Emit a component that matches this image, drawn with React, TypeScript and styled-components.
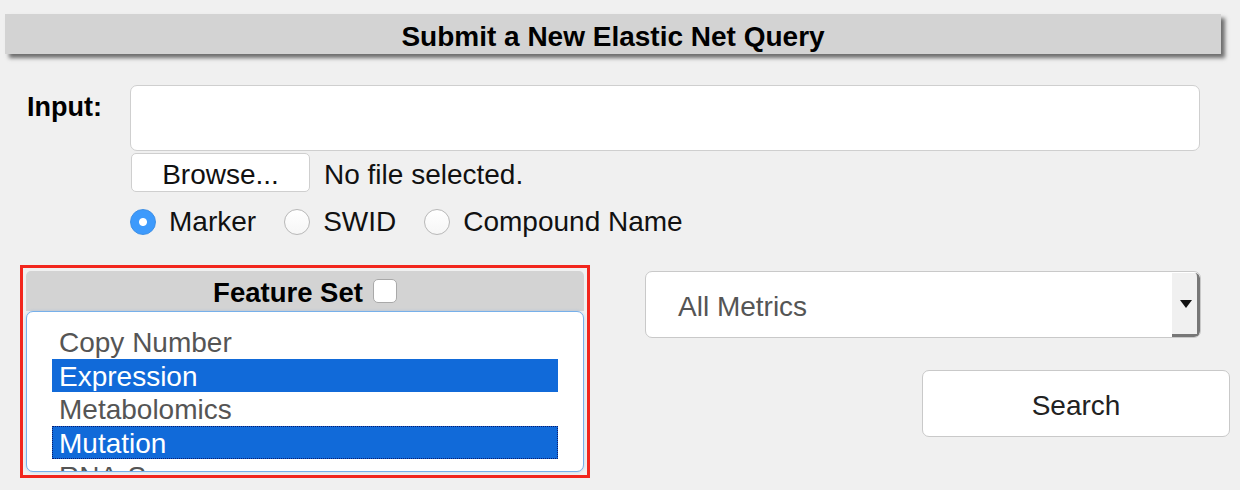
import React, { useState } from 'react';
import styled, { createGlobalStyle } from 'styled-components';

const GlobalStyle = createGlobalStyle`
    html, body {
        margin: 0;
        padding: 0;
        background: #f0f0f0;
    }
    body {
        font-family: "Liberation Sans", Arial, Helvetica, sans-serif;
        font-size: 28px;
        color: #000;
    }
`;

const FEATURES = ['Copy Number', 'Expression', 'Metabolomics', 'Mutation', 'RNA-Seq'];
const RADIOS = ['Marker', 'SWID', 'Compound Name'];

const App: React.FC = () => {
    const [idType, setIdType] = useState<string>('Marker');
    const [selected, setSelected] = useState<string[]>(['Expression', 'Mutation']);
    const [allFeatures, setAllFeatures] = useState<boolean>(false);

    const toggleFeature = (name: string) => {
        setSelected(prev => prev.includes(name) ? prev.filter(f => f !== name) : [...prev, name]);
    };

    return (
        <>
            <GlobalStyle />
            <Page>
                <Title>Submit a New Elastic Net Query</Title>
                <InputRow>
                    <Label>Input:</Label>
                    <Field>
                        <TextBox />
                        <FileRow>
                            <BrowseButton type="button">Browse...</BrowseButton>
                            <FileText>No file selected.</FileText>
                        </FileRow>
                        <RadioRow>
                            {
                                RADIOS.map(name =>
                                    <RadioLabel key={name}>
                                        <Radio
                                            type="radio"
                                            name="idType"
                                            checked={idType === name}
                                            onChange={() => setIdType(name)}
                                        />
                                        {name}
                                    </RadioLabel>
                                )
                            }
                        </RadioRow>
                    </Field>
                </InputRow>
                <Lower>
                    <FeatureBox>
                        <FeatureHeader>
                            Feature Set
                            <Check
                                type="checkbox"
                                checked={allFeatures}
                                onChange={() => setAllFeatures(!allFeatures)}
                            />
                        </FeatureHeader>
                        <FeatureList>
                            {
                                FEATURES.map(name =>
                                    <FeatureItem
                                        key={name}
                                        $selected={selected.includes(name)}
                                        $focused={name === 'Mutation'}
                                        onClick={() => toggleFeature(name)}
                                    >
                                        {name}
                                    </FeatureItem>
                                )
                            }
                        </FeatureList>
                    </FeatureBox>
                    <RightColumn>
                        <SelectBox>
                            <SelectValue>All Metrics</SelectValue>
                            <SelectArrow>
                                <Triangle />
                            </SelectArrow>
                        </SelectBox>
                        <SearchButton type="button">Search</SearchButton>
                    </RightColumn>
                </Lower>
            </Page>
        </>
    );
};

const Page = styled.div`
    width: 1240px;
    height: 490px;
    padding-top: 14px;
    box-sizing: border-box;
    overflow: hidden;
`;

const Title = styled.div`
    margin-left: 5px;
    width: 1216px;
    height: 40px;
    line-height: 45px;
    background: #d3d3d3;
    box-shadow: 4px 4px 4px rgba(0, 0, 0, 0.55);
    text-align: center;
    font-weight: bold;
    font-size: 28px;
`;

const InputRow = styled.div`
    display: flex;
    margin-top: 31px;
`;

const Label = styled.div`
    width: 103px;
    margin-left: 27px;
    padding-top: 7px;
    font-weight: bold;
    font-size: 27px;
    line-height: 30px;
`;

const Field = styled.div`
    display: flex;
    flex-direction: column;
`;

const TextBox = styled.div`
    width: 1070px;
    height: 66px;
    box-sizing: border-box;
    background: #fff;
    border: 1px solid #cfcfcf;
    border-radius: 7px;
`;

const FileRow = styled.div`
    display: flex;
    align-items: center;
    margin-top: 2px;
    margin-left: 1px;
    height: 39px;
`;

const BrowseButton = styled.button`
    width: 179px;
    height: 39px;
    box-sizing: border-box;
    background: #fff;
    border: 1px solid #cfcfcf;
    border-radius: 5px;
    font-family: inherit;
    font-size: 28px;
    color: #111;
    padding: 4px 0 0;
`;

const FileText = styled.span`
    margin-left: 14px;
    padding-top: 5px;
    font-size: 28px;
    color: #111;
`;

const RadioRow = styled.div`
    display: flex;
    align-items: center;
    height: 30px;
    margin-top: 15px;
`;

const RadioLabel = styled.label`
    display: flex;
    align-items: center;
    margin-right: 28px;
    font-size: 28px;
    color: #111;
`;

const Radio = styled.input`
    appearance: none;
    margin: 0 13px 0 0;
    width: 26px;
    height: 26px;
    border-radius: 50%;
    box-sizing: border-box;
    border: 1px solid #b8b8b8;
    background: linear-gradient(#fff, #f6f6f6);

    &:checked {
        border-color: #3b8ee6;
        background: radial-gradient(circle, #fff 0 3.5px, #3d9afc 4.5px);
    }
`;

const Lower = styled.div`
    display: flex;
    margin-top: 28px;
`;

const FeatureBox = styled.div`
    margin-left: 20px;
    width: 570px;
    height: 213px;
    box-sizing: border-box;
    border: 3px solid #f2261d;
    padding: 3px;
    display: flex;
    flex-direction: column;
`;

const FeatureHeader = styled.div`
    display: flex;
    align-items: center;
    justify-content: center;
    height: 40px;
    background: #d3d3d3;
    border-radius: 5px 5px 0 0;
    font-weight: bold;
    font-size: 27.5px;
    padding-top: 3px;
    box-sizing: border-box;
`;

const Check = styled.input`
    appearance: none;
    margin: -3px 0 0 10px;
    width: 24px;
    height: 24px;
    box-sizing: border-box;
    background: #fff;
    border: 1px solid #a9a9a9;
    border-radius: 5px;
`;

const FeatureList = styled.div`
    flex: 1;
    overflow: hidden;
    background: #fff;
    border: 1px solid #77b0ea;
    border-radius: 7px;
    box-shadow: 0 0 3px rgba(100, 160, 230, 0.35);
    padding: 13px 25px 0 25px;
`;

const FeatureItem = styled.div<{ $selected: boolean; $focused: boolean }>`
    height: 33.5px;
    line-height: 34px;
    box-sizing: border-box;
    padding-left: 6px;
    font-size: 28px;
    white-space: nowrap;
    cursor: default;
    overflow: hidden;
    color: ${p => p.$selected ? '#fff' : '#555'};
    background: ${p => p.$selected ? '#116ad9' : 'transparent'};
    border: 1px dotted ${p => p.$focused ? '#0b1c6e' : 'transparent'};
`;

const RightColumn = styled.div`
    display: flex;
    flex-direction: column;
    margin-left: 55px;
    width: 585px;
`;

const SelectBox = styled.div`
    display: flex;
    margin-top: 6px;
    width: 556px;
    height: 67px;
    box-sizing: border-box;
    background: #fff;
    border: 1px solid #c9c9c9;
    border-radius: 7px;
    overflow: hidden;
`;

const SelectValue = styled.div`
    flex: 1;
    display: flex;
    align-items: center;
    padding-left: 32px;
    padding-top: 5px;
    font-size: 28px;
    color: #555;
`;

const SelectArrow = styled.div`
    width: 28px;
    display: flex;
    align-items: center;
    justify-content: center;
    background: #f0f0f0;
    border-right: 3px solid #777;
    border-bottom: 3px solid #777;
    border-top-right-radius: 5px;
    margin-top: 1px;
    box-sizing: border-box;
`;

const Triangle = styled.div`
    width: 0;
    height: 0;
    border-left: 6px solid transparent;
    border-right: 6px solid transparent;
    border-top: 8px solid #111;
    margin-left: 2px;
`;

const SearchButton = styled.button`
    align-self: flex-end;
    margin-top: 32px;
    width: 308px;
    height: 67px;
    box-sizing: border-box;
    background: #fff;
    border: 1px solid #c9c9c9;
    border-radius: 7px;
    font-family: inherit;
    font-size: 28px;
    color: #222;
    padding: 4px 0 0;
`;

export default App;
